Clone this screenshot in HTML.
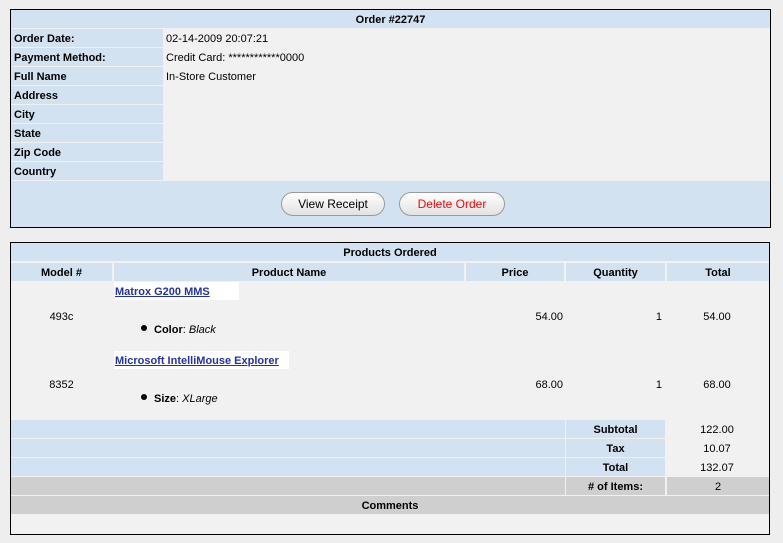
<!DOCTYPE html>
<html><head><style>
body{margin:0;width:783px;height:543px;background:#eeeeee;font-family:"Liberation Sans",Tahoma,sans-serif;font-size:11px;color:#000;position:relative;overflow:hidden}
div{position:absolute;box-sizing:border-box}
.box{border:1px solid #000}
.b{background:#d3e2f1;font-weight:bold;line-height:20px}
.g{background:#cfcfcf;font-weight:bold;line-height:20px}
.c{text-align:center}
.t{line-height:20px}
.r{text-align:right}
a{color:#2233aa;font-weight:bold;text-decoration:underline}
.btn{border:1px solid #9a9a9a;border-radius:12px;background:linear-gradient(#fff,#e2e2e2);text-align:center;line-height:22px;font-size:12px;height:24px}
.dot{width:6px;height:6px;border-radius:3px;background:#000}
</style></head><body>
<div class="box" style="left:10px;top:9px;width:761px;height:219px;background:#f1f1f1"></div>
<div class="b c" style="left:11px;top:10px;width:759px;height:18px">Order #22747</div>
<div class="b" style="left:11px;top:29px;width:152px;height:18px;padding-left:3px">Order Date:</div>
<div class="b" style="left:11px;top:48px;width:152px;height:18px;padding-left:3px">Payment Method:</div>
<div class="b" style="left:11px;top:67px;width:152px;height:18px;padding-left:3px">Full Name</div>
<div class="b" style="left:11px;top:86px;width:152px;height:18px;padding-left:3px">Address</div>
<div class="b" style="left:11px;top:105px;width:152px;height:18px;padding-left:3px">City</div>
<div class="b" style="left:11px;top:124px;width:152px;height:18px;padding-left:3px">State</div>
<div class="b" style="left:11px;top:143px;width:152px;height:18px;padding-left:3px">Zip Code</div>
<div class="b" style="left:11px;top:162px;width:152px;height:18px;padding-left:3px">Country</div>
<div class="t" style="left:166px;top:29px">02-14-2009 20:07:21</div>
<div class="t" style="left:166px;top:48px">Credit Card: ************0000</div>
<div class="t" style="left:166px;top:67px">In-Store Customer</div>
<div class="b" style="left:11px;top:181px;width:759px;height:46px"></div>
<div class="btn" style="left:281px;top:192px;width:104px">View Receipt</div>
<div class="btn" style="left:399px;top:192px;width:106px;color:#f00">Delete Order</div>

<div class="box" style="left:10px;top:242px;width:760px;height:293px;background:#f1f1f1"></div>
<div class="b c" style="left:11px;top:243px;width:758px;height:18px">Products Ordered</div>
<div class="b c" style="left:11px;top:263px;width:101px;height:18px">Model #</div>
<div class="b c" style="left:114px;top:263px;width:350px;height:18px">Product Name</div>
<div class="b c" style="left:466px;top:263px;width:98px;height:18px">Price</div>
<div class="b c" style="left:566px;top:263px;width:99px;height:18px">Quantity</div>
<div class="b c" style="left:667px;top:263px;width:102px;height:18px">Total</div>

<div class="t" style="left:114px;top:282px;width:125px;height:18px;background:#fff;padding-left:1px"><a>Matrox G200 MMS</a></div>
<div class="t c" style="left:11px;top:307px;width:101px">493c</div>
<div class="dot" style="left:141px;top:325px"></div>
<div class="t" style="left:154px;top:320px"><b>Color</b>: <i>Black</i></div>
<div class="t r" style="left:466px;top:307px;width:97px">54.00</div>
<div class="t r" style="left:566px;top:307px;width:96px">1</div>
<div class="t c" style="left:667px;top:307px;width:100px">54.00</div>

<div class="t" style="left:114px;top:351px;width:175px;height:18px;background:#fff;padding-left:1px"><a>Microsoft IntelliMouse Explorer</a></div>
<div class="t c" style="left:11px;top:375px;width:101px">8352</div>
<div class="dot" style="left:141px;top:394px"></div>
<div class="t" style="left:154px;top:389px"><b>Size</b>: <i>XLarge</i></div>
<div class="t r" style="left:466px;top:375px;width:97px">68.00</div>
<div class="t r" style="left:566px;top:375px;width:96px">1</div>
<div class="t c" style="left:667px;top:375px;width:100px">68.00</div>

<div class="b" style="left:11px;top:420px;width:554px;height:18px"></div>
<div class="b c" style="left:566px;top:420px;width:99px;height:18px">Subtotal</div>
<div class="t c" style="left:667px;top:420px;width:100px">122.00</div>
<div class="b" style="left:11px;top:439px;width:554px;height:18px"></div>
<div class="b c" style="left:566px;top:439px;width:99px;height:18px">Tax</div>
<div class="t c" style="left:667px;top:439px;width:100px">10.07</div>
<div class="b" style="left:11px;top:458px;width:554px;height:18px"></div>
<div class="b c" style="left:566px;top:458px;width:99px;height:18px">Total</div>
<div class="t c" style="left:667px;top:458px;width:100px">132.07</div>
<div class="g" style="left:11px;top:477px;width:554px;height:18px"></div>
<div class="g c" style="left:566px;top:477px;width:99px;height:18px">#&nbsp;of Items:</div>
<div class="g c" style="left:667px;top:477px;width:102px;height:18px;font-weight:normal">2</div>
<div class="g c" style="left:11px;top:496px;width:758px;height:18px">Comments</div>
</body></html>
